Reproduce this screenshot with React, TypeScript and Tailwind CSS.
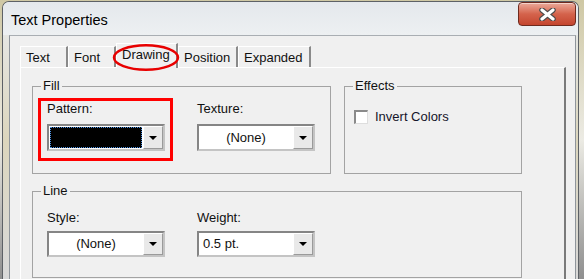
const Arrow = () => (
  <div className="flex h-full w-[20px] shrink-0 items-center justify-center border border-t-white border-l-white border-b-[#9a9a9a] border-r-[#9a9a9a] bg-[#e9e9e9]">
    <div className="h-0 w-0 border-x-[4px] border-t-[4px] border-x-transparent border-t-black" />
  </div>
);

// sunken combo box, classic windows look
const Combo = ({ value, align = "center", dark = false, h = "h-[27px]" }: { value?: string; align?: "center" | "left"; dark?: boolean; h?: string }) => (
  <div className={`flex w-[118px] ${h} border-2 border-t-[#858585] border-l-[#858585] border-b-[#c4c4c4] border-r-[#c4c4c4] bg-white`}>
    {dark ? (
      <div className="flex-1 p-[1px]">
        <div className="h-full w-full border border-dotted border-[#4a8fe0] bg-black" />
      </div>
    ) : (
      <div className={`flex flex-1 items-center ${align === "center" ? "justify-center" : "pl-[4px]"}`}>
        <span>{value}</span>
      </div>
    )}
    <Arrow />
  </div>
);

const Group = ({ label, className, children }: { label: string; className: string; children?: React.ReactNode }) => (
  <div className={`relative border border-[#a3a3a3] ${className}`}>
    <span className="absolute -top-[9px] left-[8px] bg-[#f0f0f0] px-[2px] leading-[15px]">{label}</span>
    {children}
  </div>
);

const tabs = [
  { name: "Text", w: "w-[48px]" },
  { name: "Font", w: "w-[48px]" },
  { name: "Drawing", w: "w-[62px]", active: true },
  { name: "Position", w: "w-[60px]" },
  { name: "Expanded", w: "w-[73px]" },
];

export default function App() {
  return (
    <div className="relative h-[279px] w-[584px] overflow-hidden bg-linear-to-b from-[#cfc8a4] via-[#ecebe4] to-[#8f8f8f] font-['Liberation_Sans',Arial,sans-serif] text-[13px] text-[#111]">
      <div className="ml-[2px] mt-[1px] flex h-[278px] w-[577px] flex-col rounded-t-[7px] border-x border-t border-[#5d6166] bg-linear-to-b from-[#e8ebee] via-[#dcd6bd] to-[#d9d9d9]">
        {/* title bar */}
        <div className="flex h-[33px] shrink-0 items-start justify-between rounded-t-[6px] bg-linear-to-b from-[#e4e8ec] to-[#edf0f2]">
          <span className="ml-[8px] mt-[10px] text-[14.5px] leading-[17px] text-black">Text Properties</span>
          <div className="mr-[2px] flex h-[24px] w-[58px] items-center justify-center rounded-[4px] border border-[#6e2a1e] bg-linear-to-b from-[#eaa99a] via-[#d4634c] to-[#c4452e] shadow-[inset_0_1px_0_rgba(255,255,255,0.5)]">
            <svg width="17" height="13" viewBox="0 0 17 13">
              <path d="M3 2 L14 11 M14 2 L3 11" stroke="#4b4b4b" strokeWidth="5.5" strokeLinecap="round" />
              <path d="M3 2 L14 11 M14 2 L3 11" stroke="#ffffff" strokeWidth="3.2" strokeLinecap="round" />
            </svg>
          </div>
        </div>

        {/* client area */}
        <div className="ml-[6px] mr-[2px] min-h-0 flex-1 overflow-hidden border-x border-t border-x-[#8f959b] border-t-[#a9aeb3] bg-[#f0f0f0] pl-[10px] pt-[7px]">
          <div className="flex h-[24px] items-end">
            {tabs.map((t) =>
              t.active ? (
                <div key={t.name} className={`relative z-10 -mb-[1px] h-[25px] ${t.w} border-t border-l border-white border-r-2 border-r-[#8a8a8a] bg-[#f0f0f0] pl-[5px] pt-[3px] leading-[15px]`}>
                  {t.name}
                </div>
              ) : (
                <div key={t.name} className={`h-[21px] ${t.w} border-t border-l border-white border-r-2 border-r-[#8a8a8a] bg-[#f0f0f0] pl-[5px] pt-[3px] leading-[15px]`}>
                  {t.name}
                </div>
              )
            )}
          </div>

          <div className="h-[220px] w-[546px] border-t border-l border-white border-r-2 border-r-[#7a7a7a] pl-[11px] pt-[18px]">
            <div className="flex gap-[13px]">
              <Group label="Fill" className="h-[88px] w-[299px]">
                <div className="flex items-start">
                  <div className="ml-[5px] mt-[11px] w-[135px] border-[3px] border-[#ff0000] pb-[7px] pl-[6px]">
                    <div className="leading-[15px]">Pattern:</div>
                    <div className="mt-[8px]">
                      <Combo dark />
                    </div>
                  </div>
                  <div className="ml-[24px] mt-[14px]">
                    <div className="leading-[15px]">Texture:</div>
                    <div className="mt-[8px]">
                      <Combo value="(None)" />
                    </div>
                  </div>
                </div>
              </Group>
              <Group label="Effects" className="h-[88px] w-[178px]">
                <div className="ml-[9px] mt-[22px] flex items-center gap-[7px]">
                  <div className="h-[14px] w-[14px] border-t-2 border-l-2 border-b border-r border-t-[#8a8a8a] border-l-[#8a8a8a] border-b-[#dedede] border-r-[#dedede] bg-white" />
                  <span className="leading-[15px] text-[#14142a]">Invert Colors</span>
                </div>
              </Group>
            </div>

            <Group label="Line" className="mt-[17px] h-[87px] w-[490px]">
              <div className="flex gap-[32px] pl-[14px] pt-[18px]">
                <div>
                  <div className="leading-[15px]">Style:</div>
                  <div className="mt-[6px]">
                    <Combo value="(None)" h="h-[26px]" />
                  </div>
                </div>
                <div>
                  <div className="leading-[15px]">Weight:</div>
                  <div className="mt-[6px]">
                    <Combo value="0.5 pt." align="left" h="h-[26px]" />
                  </div>
                </div>
              </div>
            </Group>
          </div>
        </div>
      </div>

      {/* red annotation around the active tab */}
      <svg className="absolute left-[112px] top-[43px] z-20" width="68" height="30" viewBox="0 0 68 30">
        <ellipse cx="34" cy="14.5" rx="32" ry="12.3" fill="none" stroke="#e80000" strokeWidth="2.5" />
      </svg>
    </div>
  );
}
